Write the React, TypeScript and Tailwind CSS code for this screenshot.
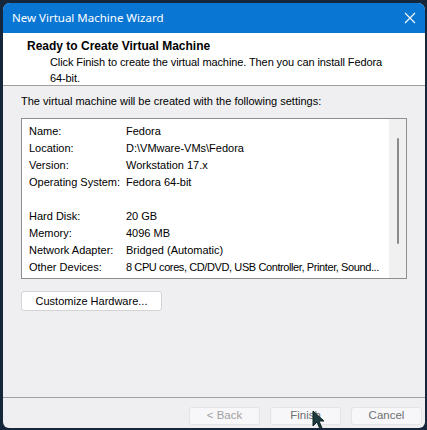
const font = { fontFamily: '"Liberation Sans", Arial, sans-serif' }
const titleFont = { fontFamily: '"Noto Sans", "Open Sans", sans-serif' }

const rows: [string, string][] = [
  ['Name:', 'Fedora'],
  ['Location:', 'D:\\VMware-VMs\\Fedora'],
  ['Version:', 'Workstation 17.x'],
  ['Operating System:', 'Fedora 64-bit'],
  ['', ''],
  ['Hard Disk:', '20 GB'],
  ['Memory:', '4096 MB'],
  ['Network Adapter:', 'Bridged (Automatic)'],
  ['Other Devices:', '8 CPU cores, CD/DVD, USB Controller, Printer, Sound...'],
]

const WizardButton = ({ label, dim }: { label: string; dim?: boolean }) => (
  <button
    type="button"
    className={
      'h-[18px] w-[71px] rounded-[3px] border border-[#e4e4e6] bg-[#f7f7f9] text-[11.5px] leading-none ' +
      (dim ? 'text-[#a2a2a4]' : 'text-[#707072]')
    }
  >
    {label}
  </button>
)

export default function App() {
  return (
    <div className="h-[430px] w-[427px] overflow-hidden bg-[#16263a] pl-[3px] pt-[3px]" style={font}>
      <div className="relative flex h-[425px] w-[422px] flex-col overflow-hidden rounded-t-[7px] rounded-b-[6px] bg-[#efeff1]">
        {/* title bar */}
        <div className="flex h-[30px] items-center justify-between bg-[#0a76d3] pl-[9px] pr-[8px] text-white" style={titleFont}>
          <span className="text-[11.5px]">New Virtual Machine Wizard</span>
          <svg width="12" height="12" viewBox="0 0 12 12" className="mr-[1px]">
            <path d="M1 1 L11 11 M11 1 L1 11" stroke="white" strokeWidth="1.1" />
          </svg>
        </div>

        {/* header */}
        <div className="h-[53px] border-b border-[#a0a0a2] bg-white pl-[24px] pt-[5px] text-[11px] leading-[16px] text-black">
          <div className="text-[12px] font-bold">Ready to Create Virtual Machine</div>
          <div className="pl-[23px] tracking-[-0.1px]">
            Click Finish to create the virtual machine. Then you can install Fedora
            <br />
            64-bit.
          </div>
        </div>

        {/* body */}
        <div className="flex flex-1 flex-col px-[18px] pt-[7px] text-[11px] text-black">
          <div className="leading-[16px]">The virtual machine will be created with the following settings:</div>
          <div className="mt-[9px] flex h-[161px] border border-[#8e8e90] bg-white">
            <div className="flex-1 overflow-hidden pl-[7px] pt-[4px]">
              {rows.map(([k, v], i) => (
                <div key={i} className="flex h-[17px] items-center whitespace-nowrap">
                  <span className="w-[97px] shrink-0">{k}</span>
                  <span className={i === rows.length - 1 ? 'tracking-[-0.4px]' : ''}>{v}</span>
                </div>
              ))}
            </div>
            <div className="flex w-[17px] shrink-0 justify-center bg-[#f0f0f0] pt-[19px]">
              <div className="h-[106px] w-[2px] rounded-full bg-[#8a8a8c]" />
            </div>
          </div>
          <button
            type="button"
            className="mt-[12px] h-[20px] w-[141px] rounded-[3px] border border-[#d4d4d6] bg-white text-[11px] leading-none"
          >
            Customize Hardware...
          </button>
        </div>

        {/* footer */}
        <div className="flex h-[31px] items-start justify-end gap-[10px] border-t border-[#a2a2a4] pr-[3px] pt-[9px]">
          <WizardButton label="< Back" dim />
          <WizardButton label="Finish" />
          <WizardButton label="Cancel" />
        </div>

        {/* mouse pointer */}
        <svg className="absolute left-[309px] top-[407px]" width="14" height="20" viewBox="0 0 14 20">
          <path d="M1 1 L1 16 L5 12 L8 19 L10 18 L7 11 L12 11 Z" fill="#1f3b3f" stroke="#0e2226" strokeWidth="1" />
        </svg>
      </div>
    </div>
  )
}
